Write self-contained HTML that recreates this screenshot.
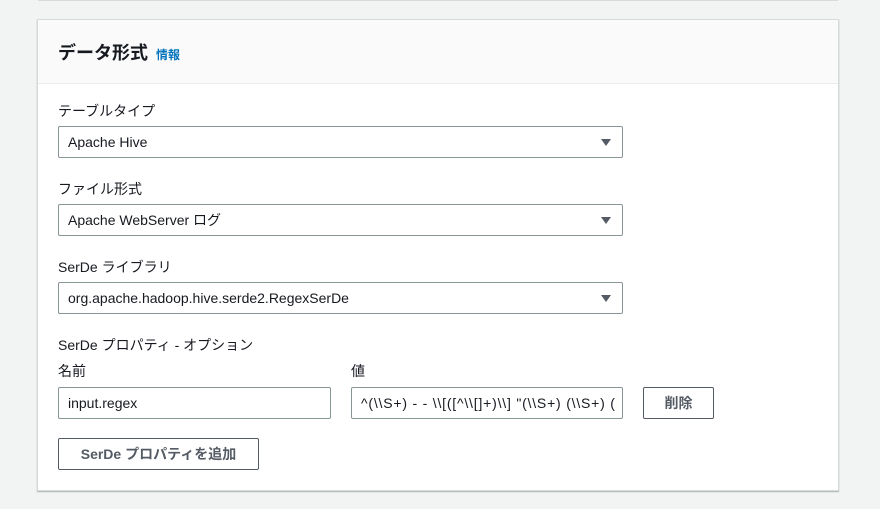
<!DOCTYPE html>
<html><head><meta charset="utf-8"><style>
body{margin:0;width:880px;height:509px;background:#f2f3f3;font-family:"Liberation Sans","Noto Sans CJK JP",sans-serif;color:#16191f;position:relative;overflow:hidden}
.top{position:absolute;left:38px;top:0;width:800px;height:1px;background:#d5dbdb}
.card{position:absolute;left:37px;top:19px;width:800px;height:470px;background:#fff;border:1px solid #d5dbdb;box-shadow:0 1px 1px rgba(0,28,36,.3)}
.hd{height:63px;background:#fafafa;border-bottom:1px solid #eaeded;position:relative}
.hd h2{position:absolute;left:20px;top:19px;margin:0;font-size:18px;font-weight:bold}
.hd a{font-size:12px;color:#0073bb;font-weight:bold;margin-left:8px}
.ab{position:absolute;font-size:14px}
.inp{position:absolute;border:1px solid #879596;border-radius:2px;box-sizing:border-box;height:32px;font-size:14px;line-height:30px;padding-left:9px;white-space:nowrap;overflow:hidden}
.arr{position:absolute;right:11px;top:12px;width:0;height:0;border-left:5px solid transparent;border-right:5px solid transparent;border-top:7px solid #545b64}
.btn{position:absolute;border:1px solid #545b64;border-radius:2px;box-sizing:border-box;font-size:14px;font-weight:bold;color:#545b64;text-align:center;background:#fff}
</style></head><body>
<div class="top"></div>
<div class="card"><div class="hd"><h2>データ形式<a>情報</a></h2></div></div>
<div class="ab" style="left:58px;top:101px">テーブルタイプ</div>
<div class="inp" style="left:58px;top:126px;width:565px">Apache Hive<span class="arr"></span></div>
<div class="ab" style="left:58px;top:179px">ファイル形式</div>
<div class="inp" style="left:58px;top:204px;width:565px">Apache WebServer ログ<span class="arr"></span></div>
<div class="ab" style="left:58px;top:257px">SerDe ライブラリ</div>
<div class="inp" style="left:58px;top:282px;width:565px">org.apache.hadoop.hive.serde2.RegexSerDe<span class="arr"></span></div>
<div class="ab" style="left:58px;top:335px">SerDe プロパティ - オプション</div>
<div class="ab" style="left:58px;top:361px">名前</div>
<div class="ab" style="left:351px;top:361px">値</div>
<div class="inp" style="left:58px;top:387px;width:273px">input.regex</div>
<div class="inp" style="left:351px;top:387px;width:272px;padding-left:9px;letter-spacing:0.8px">^(\\S+) - - \\[([^\\[]+)\\] "(\\S+) (\\S+) (</div>
<div class="btn" style="left:643px;top:387px;width:71px;height:32px;line-height:30px">削除</div>
<div class="btn" style="left:58px;top:438px;width:201px;height:32px;line-height:30px">SerDe プロパティを追加</div>
</body></html>
